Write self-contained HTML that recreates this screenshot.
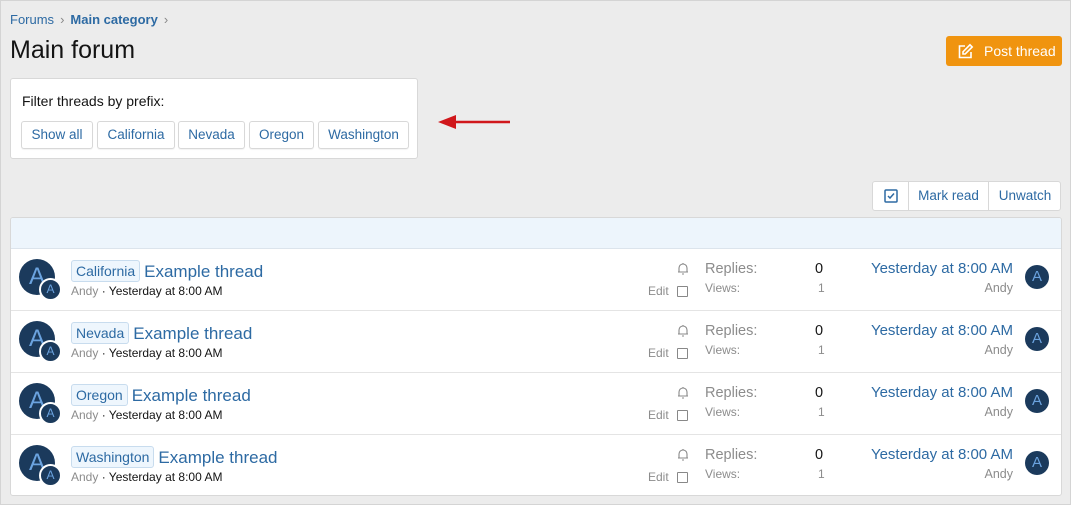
<!DOCTYPE html>
<html><head><style>
body{margin:0;width:1071px;height:505px;background:#ececec;font-family:"Liberation Sans",Arial,sans-serif;position:relative;overflow:hidden;}
.frame{position:absolute;left:0;top:0;width:1069px;height:503px;border:1px solid #d4d4d4;}
.abs{position:absolute}
.crumb{left:10px;top:12px;font-size:13px;color:#2d6aa3}
.crumb b{font-weight:bold}
.crumb span.g{color:#888;margin:0 6px}
h1{position:absolute;left:10px;top:36px;margin:0;font-size:25px;font-weight:normal;color:#141414}
.post{left:946px;top:36px;width:116px;height:30px;background:#f0940f;border-radius:3px;color:#fff;font-size:14px;line-height:30px}
.filter{left:10px;top:78px;width:408px;height:81px;background:#fff;border:1px solid #d8d8d8;border-radius:3px;box-sizing:border-box}
.btn{position:absolute;top:42px;height:28px;border:1px solid #d8d8d8;border-radius:3px;background:#fff;box-sizing:border-box;color:#2d6aa3;font-size:13.5px;line-height:26px;text-align:center;box-shadow:0 1px 1px rgba(0,0,0,.05)}
.tools{left:872px;top:181px;width:189px;height:30px;background:#fff;border:1px solid #d8d8d8;border-radius:3px;box-sizing:border-box;font-size:13.5px;color:#2d6aa3}
.list{left:10px;top:217px;width:1052px;height:279px;background:#fff;border:1px solid #d8d8d8;border-radius:3px;box-sizing:border-box;overflow:hidden}
.hdr{height:30px;background:#edf5fc;border-bottom:1px solid #dce4ec}
.row{position:relative;height:61px;border-bottom:1px solid #e4e4e4}
.row:last-child{border-bottom:none}
.av{position:absolute;left:8px;top:10px;width:36px;height:36px;border-radius:50%;background:#1b3a5c;color:#6ba3df;font-size:24px;text-align:center;line-height:36px}
.av2{position:absolute;left:28px;top:29px;width:19px;height:19px;border-radius:50%;background:#1b3a5c;border:2px solid #fff;color:#6ba3df;font-size:12px;text-align:center;line-height:19px}
.av3{position:absolute;left:1014px;top:16px;width:24px;height:24px;border-radius:50%;background:#1b3a5c;color:#6ba3df;font-size:15px;text-align:center;line-height:24px}
.tag{display:inline-block;border:1px solid #c8dcee;background:#eef6fd;border-radius:3px;color:#2d6aa3;font-size:14px;padding:1px 4px;line-height:18px;margin-right:4px;vertical-align:1px}
.title{position:absolute;left:60px;top:11px;font-size:17px;color:#2d6aa3}
.meta{position:absolute;left:60px;top:35px;font-size:12px;color:#141414}
.meta span{color:#8c8c8c}
.bell{position:absolute;left:666px;top:13px}
.edit{position:absolute;left:637px;top:35px;font-size:12px;color:#8c8c8c}
.cb{position:absolute;left:666px;top:37px;width:9px;height:9px;border:1px solid #888;border-radius:1px}
.rl{position:absolute;left:694px;top:12px;font-size:14.5px;color:#8c8c8c}
.vl{position:absolute;left:694px;top:32px;font-size:12px;color:#8c8c8c}
.rv{position:absolute;left:804px;top:12px;font-size:14.5px;color:#141414}
.vv{position:absolute;left:807px;top:32px;font-size:12px;color:#8c8c8c}
.lp{position:absolute;right:48px;top:11px;font-size:15px;color:#2d6aa3}
.lu{position:absolute;right:48px;top:32px;font-size:12.5px;color:#8c8c8c}
</style></head><body>
<div class="frame"></div>
<div class="abs crumb">Forums<span class="g">›</span><b>Main category</b><span class="g">›</span></div>
<h1>Main forum</h1>
<div class="abs post"><svg style="position:absolute;left:11px;top:7px" width="17" height="17" viewBox="0 0 17 17" fill="none" stroke="#fff" stroke-width="1.6"><path d="M8 3H2.5v11.5H14V9"/><path d="M13 1.8l2.2 2.2-7 7H6V8.8z"/></svg><span style="position:absolute;left:38px">Post thread</span></div>
<div class="abs filter">
<div style="position:absolute;left:11px;top:14px;font-size:14px;color:#141414">Filter threads by prefix:</div>
<div class="btn" style="left:10px;width:72px">Show all</div>
<div class="btn" style="left:86px;width:78px">California</div>
<div class="btn" style="left:167px;width:67px">Nevada</div>
<div class="btn" style="left:238px;width:65px">Oregon</div>
<div class="btn" style="left:307px;width:91px">Washington</div>
</div>
<svg class="abs" style="left:436px;top:112px" width="76" height="20"><path d="M74 10H12" stroke="#d0171b" stroke-width="2.5"/><path d="M2 10L20 3v14z" fill="#d0171b"/></svg>
<div class="abs tools">
<div style="position:absolute;left:0;top:0;width:35px;height:28px;border-right:1px solid #d8d8d8"><svg style="position:absolute;left:11px;top:7px" width="14" height="14" viewBox="0 0 14 14" fill="none" stroke="#2d6aa3" stroke-width="1.5"><rect x="1" y="1" width="12" height="12" rx="1"/><path d="M4 7l2 2 4-4.5"/></svg></div>
<div style="position:absolute;left:36px;top:0;width:79px;height:28px;line-height:28px;text-align:center;border-right:1px solid #d8d8d8">Mark read</div>
<div style="position:absolute;left:116px;top:0;width:72px;height:28px;line-height:28px;text-align:center">Unwatch</div>
</div>
<div class="abs list">
<div class="hdr"></div>
<div class="row"><div class="av">A</div><div class="av2">A</div><div class="title"><span class="tag">California</span>Example thread</div><div class="meta"><span>Andy</span> · Yesterday at 8:00 AM</div><svg class="bell" width="12" height="13" viewBox="0 0 12 13" fill="none" stroke="#888" stroke-width="1.1"><path d="M2 10V6a4 4 0 0 1 8 0v4zM1 10h10M6 1v1M5 12h2"/></svg><div class="edit">Edit</div><div class="cb"></div><div class="rl">Replies:</div><div class="vl">Views:</div><div class="rv">0</div><div class="vv">1</div><div class="lp">Yesterday at 8:00 AM</div><div class="lu">Andy</div><div class="av3">A</div></div>
<div class="row"><div class="av">A</div><div class="av2">A</div><div class="title"><span class="tag">Nevada</span>Example thread</div><div class="meta"><span>Andy</span> · Yesterday at 8:00 AM</div><svg class="bell" width="12" height="13" viewBox="0 0 12 13" fill="none" stroke="#888" stroke-width="1.1"><path d="M2 10V6a4 4 0 0 1 8 0v4zM1 10h10M6 1v1M5 12h2"/></svg><div class="edit">Edit</div><div class="cb"></div><div class="rl">Replies:</div><div class="vl">Views:</div><div class="rv">0</div><div class="vv">1</div><div class="lp">Yesterday at 8:00 AM</div><div class="lu">Andy</div><div class="av3">A</div></div>
<div class="row"><div class="av">A</div><div class="av2">A</div><div class="title"><span class="tag">Oregon</span>Example thread</div><div class="meta"><span>Andy</span> · Yesterday at 8:00 AM</div><svg class="bell" width="12" height="13" viewBox="0 0 12 13" fill="none" stroke="#888" stroke-width="1.1"><path d="M2 10V6a4 4 0 0 1 8 0v4zM1 10h10M6 1v1M5 12h2"/></svg><div class="edit">Edit</div><div class="cb"></div><div class="rl">Replies:</div><div class="vl">Views:</div><div class="rv">0</div><div class="vv">1</div><div class="lp">Yesterday at 8:00 AM</div><div class="lu">Andy</div><div class="av3">A</div></div>
<div class="row"><div class="av">A</div><div class="av2">A</div><div class="title"><span class="tag">Washington</span>Example thread</div><div class="meta"><span>Andy</span> · Yesterday at 8:00 AM</div><svg class="bell" width="12" height="13" viewBox="0 0 12 13" fill="none" stroke="#888" stroke-width="1.1"><path d="M2 10V6a4 4 0 0 1 8 0v4zM1 10h10M6 1v1M5 12h2"/></svg><div class="edit">Edit</div><div class="cb"></div><div class="rl">Replies:</div><div class="vl">Views:</div><div class="rv">0</div><div class="vv">1</div><div class="lp">Yesterday at 8:00 AM</div><div class="lu">Andy</div><div class="av3">A</div></div>
</div>
</body></html>
